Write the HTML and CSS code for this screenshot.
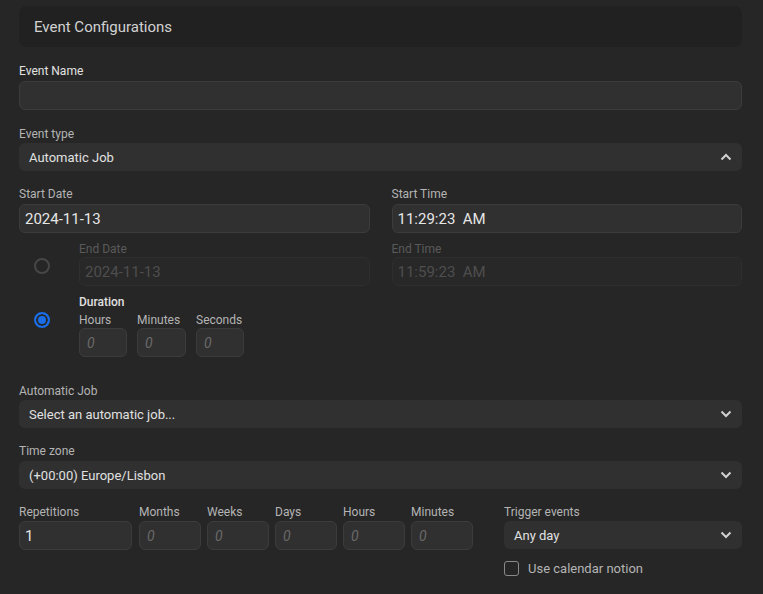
FILE: index.html
```html
<!DOCTYPE html>
<html>
<head>
<meta charset="utf-8">
<link rel="stylesheet" href="styles.css">
</head>
<body>
<div class="page">
  <div class="header">Event Configurations</div>

  <div class="group g-name">
    <label class="lbl lbl-strong">Event Name</label>
    <div class="input"></div>
  </div>

  <div class="group g-type">
    <label class="lbl">Event type</label>
    <div class="select"><span>Automatic Job</span>
      <svg class="chev" width="12" height="8" viewBox="0 0 12 8"><path d="M1.5 6.5 L6 2 L10.5 6.5" fill="none" stroke="#d0d0d0" stroke-width="2"/></svg>
    </div>
  </div>

  <div class="row2 g-start">
    <div class="col">
      <label class="lbl">Start Date</label>
      <div class="input val">2024-11-13</div>
    </div>
    <div class="col">
      <label class="lbl">Start Time</label>
      <div class="input val">11:29:23&nbsp;&nbsp;AM</div>
    </div>
  </div>

  <div class="row2 opt-end">
    <div class="end-left">
      <div class="radio-cell"><span class="radio"></span></div>
      <div class="col">
        <label class="lbl dim">End Date</label>
        <div class="input val disabled">2024-11-13</div>
      </div>
    </div>
    <div class="col">
      <label class="lbl dim">End Time</label>
      <div class="input val disabled">11:59:23&nbsp;&nbsp;AM</div>
    </div>
  </div>

  <div class="opt opt-dur">
    <div class="radio-cell"><span class="radio on"></span></div>
    <div class="dur">
      <label class="lbl lbl-bold">Duration</label>
      <div class="dur-fields">
        <div class="small"><label class="lbl">Hours</label><div class="input ph">0</div></div>
        <div class="small"><label class="lbl">Minutes</label><div class="input ph">0</div></div>
        <div class="small"><label class="lbl">Seconds</label><div class="input ph">0</div></div>
      </div>
    </div>
  </div>

  <div class="group g-job">
    <label class="lbl">Automatic Job</label>
    <div class="select"><span>Select an automatic job...</span>
      <svg class="chev" width="12" height="8" viewBox="0 0 12 8"><path d="M1.5 1.5 L6 6 L10.5 1.5" fill="none" stroke="#d0d0d0" stroke-width="2"/></svg>
    </div>
  </div>

  <div class="group g-tz">
    <label class="lbl">Time zone</label>
    <div class="select"><span>(+00:00) Europe/Lisbon</span>
      <svg class="chev" width="12" height="8" viewBox="0 0 12 8"><path d="M1.5 1.5 L6 6 L10.5 1.5" fill="none" stroke="#d0d0d0" stroke-width="2"/></svg>
    </div>
  </div>

  <div class="rep-row">
    <div class="rep-fields">
      <div class="rf rf-rep"><label class="lbl">Repetitions</label><div class="input val">1</div></div>
      <div class="rf"><label class="lbl">Months</label><div class="input ph">0</div></div>
      <div class="rf"><label class="lbl">Weeks</label><div class="input ph">0</div></div>
      <div class="rf"><label class="lbl">Days</label><div class="input ph">0</div></div>
      <div class="rf"><label class="lbl">Hours</label><div class="input ph">0</div></div>
      <div class="rf"><label class="lbl">Minutes</label><div class="input ph">0</div></div>
    </div>
    <div class="trigger">
      <label class="lbl">Trigger events</label>
      <div class="select"><span>Any day</span>
        <svg class="chev" width="12" height="8" viewBox="0 0 12 8"><path d="M1.5 1.5 L6 6 L10.5 1.5" fill="none" stroke="#d0d0d0" stroke-width="2"/></svg>
      </div>
      <div class="check"><span class="box"></span><span class="check-text">Use calendar notion</span></div>
    </div>
  </div>
</div>
</body>
</html>
```

FILE: styles.css
```css
* { box-sizing: border-box; }
html, body { margin: 0; padding: 0; background: #262626; }
body { font-family: Roboto, "Noto Sans", sans-serif; color: #dcdcdc; }
.page { width: 763px; height: 594px; padding: 6px 21px 0 19px; overflow: hidden; }

.header {
  height: 41px; background: #212121; border-radius: 8px;
  padding-left: 15px; display: flex; align-items: center;
  font-size: 15px; color: #d2d2d2;
}

.lbl { display: block; font-size: 12px; line-height: 15px; color: #b4b4b4; }
.lbl-strong { color: #e2e2e2; }
.lbl-bold { color: #e0e0e0; font-weight: 500; }
.lbl.dim { color: #5a5a5a; }

.input {
  height: 29px; background: #303030; border: 1px solid #3c3c3c; border-radius: 6px;
  display: flex; align-items: center; padding-left: 5px;
  font-size: 15px; color: #e6e6e6;
}
.input.disabled { background: #282828; border-color: #2e2e2e; color: #4e4e4e; }
.input.ph { font-style: italic; color: #6a6a6a; padding-left: 7px; font-size: 14px; }

.select {
  height: 28px; background: #303030; border-radius: 6px;
  display: flex; align-items: center; justify-content: space-between;
  padding: 0 10px 0 10px; font-size: 13px; color: #e0e0e0;
}
.chev { display: block; }

.group { display: flex; flex-direction: column; }
.g-name { margin-top: 17px; gap: 2px; }
.g-type { margin-top: 17px; gap: 1px; }

.row2 { display: grid; grid-template-columns: 1fr 1fr; column-gap: 22px; }
.col { display: flex; flex-direction: column; gap: 2px; }
.g-start { margin-top: 16px; }

.opt { display: flex; }
.radio-cell { width: 60px; flex: none; display: flex; justify-content: center; align-items: flex-start; padding-right: 14px; }
.radio { width: 16px; height: 16px; border-radius: 50%; border: 2px solid #474747; display: block; }
.radio.on { border-color: #1a6fe8; background: #1a6fe8; box-shadow: inset 0 0 0 2px #262626; }

.opt-end { margin-top: 9px; }
.opt-end .col { gap: 0; }
.end-left { display: flex; }
.end-left .col { flex: 1; }
.opt-end .radio-cell { padding-top: 16px; }

.opt-dur { margin-top: 9px; }
.opt-dur .radio-cell { padding-top: 17px; }
.dur { display: flex; flex-direction: column; gap: 3px; }
.dur-fields { display: flex; gap: 10px; }
.small { display: flex; flex-direction: column; gap: 0; }
.small .input { width: 48px; }
.small:nth-child(2) .input { width: 49px; }

.g-job { margin-top: 27px; gap: 1px; }
.g-tz { margin-top: 16px; gap: 2px; }

.rep-row { display: flex; margin-top: 16px; justify-content: space-between; }
.rep-fields { display: flex; gap: 6px; }
.rf { display: flex; flex-direction: column; gap: 1px; }
.rf .input { width: 62px; }
.rf-rep { margin-right: 1px; }
.rf-rep .input { width: 113px; }
.trigger { width: 238px; display: flex; flex-direction: column; gap: 1px; }
.trigger .select { height: 28px; }
.check { display: flex; align-items: center; margin-top: 11px; }
.box { width: 15px; height: 15px; border: 1px solid #8a8a8a; border-radius: 3px; display: block; }
.check-text { margin-left: 9px; font-size: 13px; color: #b4b4b4; }
```
